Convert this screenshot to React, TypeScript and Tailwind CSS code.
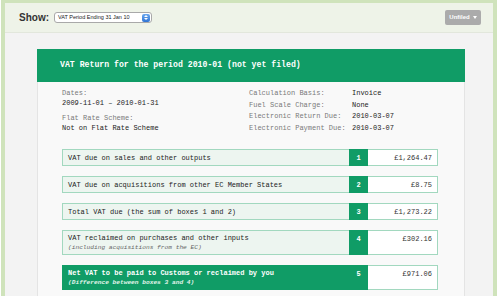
import React from 'react';

type BoxRow = {
  num: number;
  label: string;
  note?: string;
  value: string;
  total?: boolean;
};

const rows: BoxRow[] = [
  { num: 1, label: 'VAT due on sales and other outputs', value: '£1,264.47' },
  { num: 2, label: 'VAT due on acquisitions from other EC Member States', value: '£8.75' },
  { num: 3, label: 'Total VAT due (the sum of boxes 1 and 2)', value: '£1,273.22' },
  {
    num: 4,
    label: 'VAT reclaimed on purchases and other inputs',
    note: '(including acquisitions from the EC)',
    value: '£302.16',
  },
  {
    num: 5,
    label: 'Net VAT to be paid to Customs or reclaimed by you',
    note: '(Difference between boxes 3 and 4)',
    value: '£971.06',
    total: true,
  },
];

const mono = { fontFamily: '"Liberation Mono", "DejaVu Sans Mono", monospace' };

function Row({ row }: { row: BoxRow }) {
  const tall = !!row.note;
  return (
    <div className={`flex ${tall ? 'h-[25px]' : 'h-[17px]'}`}>
      <div
        className={`flex flex-1 flex-col border-[1.5px] border-r-0 pl-[5px] ${
          tall ? 'justify-start pt-[2px]' : 'justify-center'
        } ${
          row.total
            ? 'border-[#109c66] bg-[#109c66] font-bold text-white'
            : 'border-[#a2d8bf] bg-[#edf5f0] text-[#222]'
        }`}
      >
        <div className="text-[7px] leading-[10px]">{row.label}</div>
        {row.note && (
          <div
            className={`text-[6.2px] italic leading-[10px] ${
              row.total ? 'text-[#e2f4ea]' : 'text-[#666]'
            }`}
          >
            {row.note}
          </div>
        )}
      </div>
      <div
        className={`flex w-[19px] justify-center bg-[#109c66] text-[7px] font-bold leading-[10px] text-white ${
          tall ? 'pt-[4px]' : 'items-center'
        }`}
      >
        {row.num}
      </div>
      <div
        className={`flex w-[70px] justify-end border-[1.5px] border-l-0 border-[#a2d8bf] bg-white pr-[5px] text-[7px] leading-[10px] text-[#333] ${
          tall ? 'pt-[3px]' : 'items-center'
        }`}
      >
        {row.value}
      </div>
    </div>
  );
}

export default function App() {
  return (
    <div className="h-[296px] w-[500px] overflow-hidden bg-white">
      <div className="ml-[1px] flex h-full w-[496px] flex-col border-x-4 border-t-[3px] border-[#cfe3bb]">
        <header
          className="flex h-[30px] shrink-0 items-center justify-between border-b border-[#e2e7dc] bg-[#eef3e8] pl-[14px] pr-[12px]"
          style={{ fontFamily: '"Liberation Sans", Arial, sans-serif' }}
        >
          <div className="flex items-center">
            <span className="text-[10px] font-bold text-[#333]">Show:</span>
            <div className="ml-[5px] flex h-[11px] w-[98px] items-center justify-between rounded-[3px] border border-[#a9a9a9] bg-white pl-[3px] pr-[1px]">
              <span className="text-[5.5px] leading-none text-[#222]">VAT Period Ending 31 Jan 10</span>
              <span className="flex h-[8px] w-[8px] flex-col items-center justify-center gap-[1px] rounded-[2px] bg-gradient-to-b from-[#6aa8ee] to-[#2f74d4]">
                <svg width="4" height="2" viewBox="0 0 4 2">
                  <path d="M0 2 L2 0 L4 2 Z" fill="white" />
                </svg>
                <svg width="4" height="2" viewBox="0 0 4 2">
                  <path d="M0 0 L2 2 L4 0 Z" fill="white" />
                </svg>
              </span>
            </div>
          </div>
          <div className="flex h-[15px] w-[36px] items-center justify-center gap-[3px] rounded-[2px] bg-[#ababab] text-[6px] font-bold text-white">
            <span>Unfiled</span>
            <svg width="4" height="3" viewBox="0 0 4 3">
              <path d="M0 0 L2 3 L4 0 Z" fill="white" />
            </svg>
          </div>
        </header>

        <main className="flex-1 bg-[#f3f3f3] pl-[32px] pt-[16px]" style={mono}>
          <div className="w-[428px]">
            <div className="flex h-[33px] items-center bg-[#109c66] pl-[23px] text-[8.2px] font-bold text-white">
              VAT Return for the period 2010-01 (not yet filed)
            </div>
            <div className="border border-t-0 border-[#e4e4e4] bg-[#f9f9f9] pb-[20px] pl-[24px] pr-[26px] pt-[6px]">
              <div className="flex text-[7px]">
                <div className="w-[187px] leading-[10px]">
                  <div className="text-[#7a7a7a]">Dates:</div>
                  <div className="text-[#222]">2009-11-01 – 2010-01-31</div>
                  <div className="mt-[5px] text-[#7a7a7a]">Flat Rate Scheme:</div>
                  <div className="text-[#222]">Not on Flat Rate Scheme</div>
                </div>
                <div className="leading-[11.5px]">
                  {[
                    ['Calculation Basis:', 'Invoice'],
                    ['Fuel Scale Charge:', 'None'],
                    ['Electronic Return Due:', '2010-03-07'],
                    ['Electronic Payment Due:', '2010-03-07'],
                  ].map(([k, v]) => (
                    <div key={k} className="flex">
                      <span className="w-[103px] text-[#7a7a7a]">{k}</span>
                      <span className="text-[#222]">{v}</span>
                    </div>
                  ))}
                </div>
              </div>
              <div className="mt-[15px] flex flex-col gap-[10px]">
                {rows.map((r) => (
                  <Row key={r.num} row={r} />
                ))}
              </div>
            </div>
          </div>
        </main>
      </div>
    </div>
  );
}
